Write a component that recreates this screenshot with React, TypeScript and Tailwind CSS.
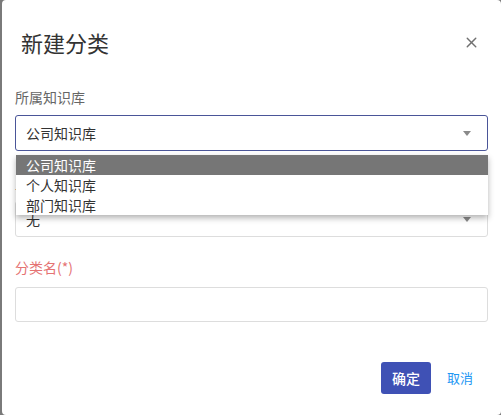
import { X } from "lucide-react";

// "New category" dialog with the knowledge-base dropdown left open.
const font = { fontFamily: '"Noto Sans CJK SC", "Noto Sans", sans-serif' };

const libraries = ["公司知识库", "个人知识库", "部门知识库"];

function Caret() {
  return (
    <svg width="8" height="5" viewBox="0 0 8 5" className="shrink-0">
      <path d="M0 0h8L4 5z" fill="#8a8a8a" />
    </svg>
  );
}

export default function App() {
  const selected = libraries[0];

  return (
    <div className="flex h-[415px] w-[501px] bg-[#7a7a7a] pl-[2px]" style={font}>
      <div className="flex flex-1 flex-col rounded-[4px] bg-white">
        <div className="flex items-center justify-between pl-[19px] pr-[21px] pt-[27px]">
          <h2 className="text-[22px] leading-[30px] text-[#333]">新建分类</h2>
          <X className="h-[17px] w-[17px] text-[#707070]" strokeWidth={2} />
        </div>

        <div className="px-[13px] pt-[30px]">
          <label className="block text-[14px] leading-[20px] text-[#666]">所属知识库</label>
          <div className="relative mt-[8px]">
            <div className="flex h-[36px] items-center justify-between rounded-[3px] border border-[#4a5598] pl-[10px] pr-[16px] text-[14px] text-[#333]">
              <span>{selected}</span>
              <Caret />
            </div>
            <ul className="absolute left-[1px] right-0 top-[40px] z-10 bg-white shadow-[0_3px_6px_rgba(0,0,0,0.3)]">
              {libraries.map((name) => (
                <li
                  key={name}
                  className={`h-[20px] pl-[10px] text-[14px] leading-[20px] ${
                    name === selected ? "bg-[#767676] text-white" : "text-[#333]"
                  }`}
                >
                  {name}
                </li>
              ))}
            </ul>
          </div>

          <label className="mt-[22px] block text-[14px] leading-[20px] text-[#666]">上级分类</label>
          <div className="mt-[8px] flex h-[36px] items-center justify-between rounded-[3px] border border-[#ddd] pl-[10px] pr-[16px] text-[14px] text-[#333]">
            <span>无</span>
            <Caret />
          </div>

          <label className="mt-[20px] block text-[14px] leading-[20px] text-[#e57373]">分类名(*)</label>
          <input className="mt-[10px] block h-[35px] w-full rounded-[3px] border border-[#ddd] px-[10px] text-[14px] outline-none" />

          <div className="mt-[40px] flex items-center justify-end gap-[16px] pr-[15px]">
            <button className="h-[32px] w-[50px] rounded-[3px] bg-[#3f51b5] text-[14px] font-medium text-white">
              确定
            </button>
            <button className="whitespace-nowrap text-[13px] text-[#2196f3]">取消</button>
          </div>
        </div>
      </div>
    </div>
  );
}
